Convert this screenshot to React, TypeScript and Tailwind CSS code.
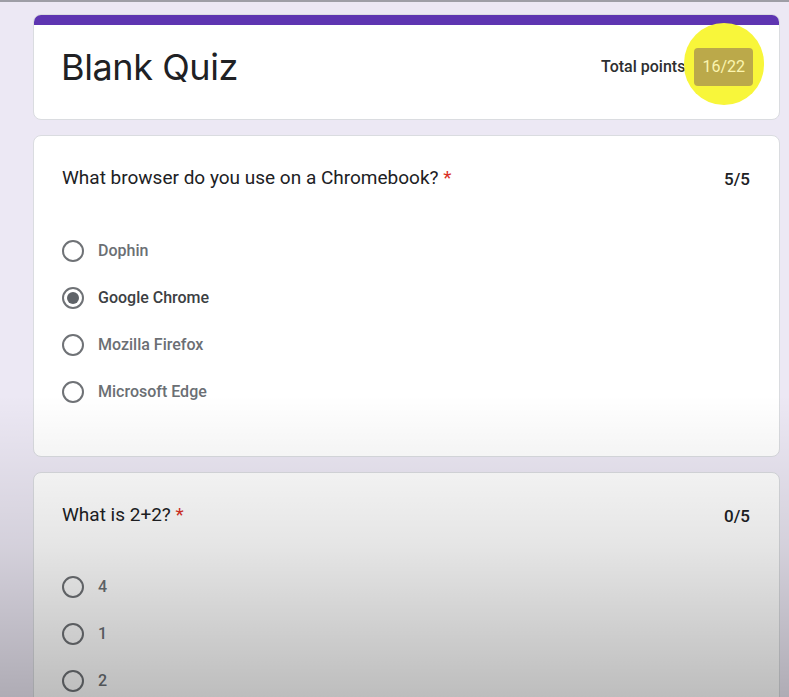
import React from "react";

type Option = { label: string; checked?: boolean };

function Radio({ checked }: { checked?: boolean }) {
  return (
    <span className="flex items-center justify-center w-[22px] h-[22px] rounded-full border-2 border-[#6f7276] shrink-0">
      {checked && <span className="w-[12px] h-[12px] rounded-full bg-[#5f6368]" />}
    </span>
  );
}

function Question({ title, score, options }: { title: string; score: string; options: Option[] }) {
  return (
    <section className="bg-white rounded-lg border border-[#dadce0] px-[28px] pt-[28px] pb-[52px]">
      <div className="flex items-start justify-between">
        <h2 className="text-[19px] text-[#202124]">
          {title} <span className="text-[#d93025]">*</span>
        </h2>
        <span className="text-[17px] text-[#202124] font-medium pt-[3px] pr-[1px]">{score}</span>
      </div>
      <ul className="mt-[46px] flex flex-col gap-[23px]">
        {options.map((o) => (
          <li key={o.label} className="flex items-center gap-[14px]">
            <Radio checked={o.checked} />
            <span
              className={
                o.checked
                  ? "text-[16px] font-medium text-[#3c4043]"
                  : "text-[16px] font-medium text-[#6b6f74]"
              }
            >
              {o.label}
            </span>
          </li>
        ))}
      </ul>
    </section>
  );
}

export default function App() {
  return (
    <div className="relative h-[697px] overflow-hidden bg-[#ece8f4] font-['Roboto','Liberation_Sans',sans-serif]">
      <div className="h-[2px] bg-[#9e9ea6]" />
      <main className="flex flex-col gap-[15px] pl-[33px] pr-[9px] pt-[12px]">
        {/* header card */}
        <section className="rounded-lg bg-white border border-[#dadce0] overflow-hidden">
          <div className="h-[10px] bg-[#5e35b1]" />
          <div className="flex items-center justify-between h-[94px] pl-[27px] pr-[26px] pb-[10px]">
            <h1 className="font-['Inter','Roboto',sans-serif] text-[36px] text-[#202124] tracking-[-0.4px]">
              Blank Quiz
            </h1>
            <div className="flex items-center gap-[9px]">
              <span className="text-[16px] font-medium text-[#2d2f31]">Total points</span>
              <span className="relative flex items-center justify-center">
                <span className="absolute w-[80px] h-[82px] rounded-full bg-[#f8f63a] -translate-y-[3px]" />
                <span className="relative rounded-sm bg-[#bba94a] px-[8px] py-[7px] text-[16px] text-[#fbf5b0]">
                  16/22
                </span>
              </span>
            </div>
          </div>
        </section>

        <Question
          title="What browser do you use on a Chromebook?"
          score="5/5"
          options={[
            { label: "Dophin" },
            { label: "Google Chrome", checked: true },
            { label: "Mozilla Firefox" },
            { label: "Microsoft Edge" },
          ]}
        />

        <Question
          title="What is 2+2?"
          score="0/5"
          options={[{ label: "4" }, { label: "1" }, { label: "2" }]}
        />
      </main>

      {/* video fade at the bottom */}
      <div className="pointer-events-none absolute inset-x-0 top-[395px] bottom-0 bg-gradient-to-b from-transparent via-[rgba(0,0,0,0.1)] to-[rgba(0,0,0,0.26)]" />
    </div>
  );
}
